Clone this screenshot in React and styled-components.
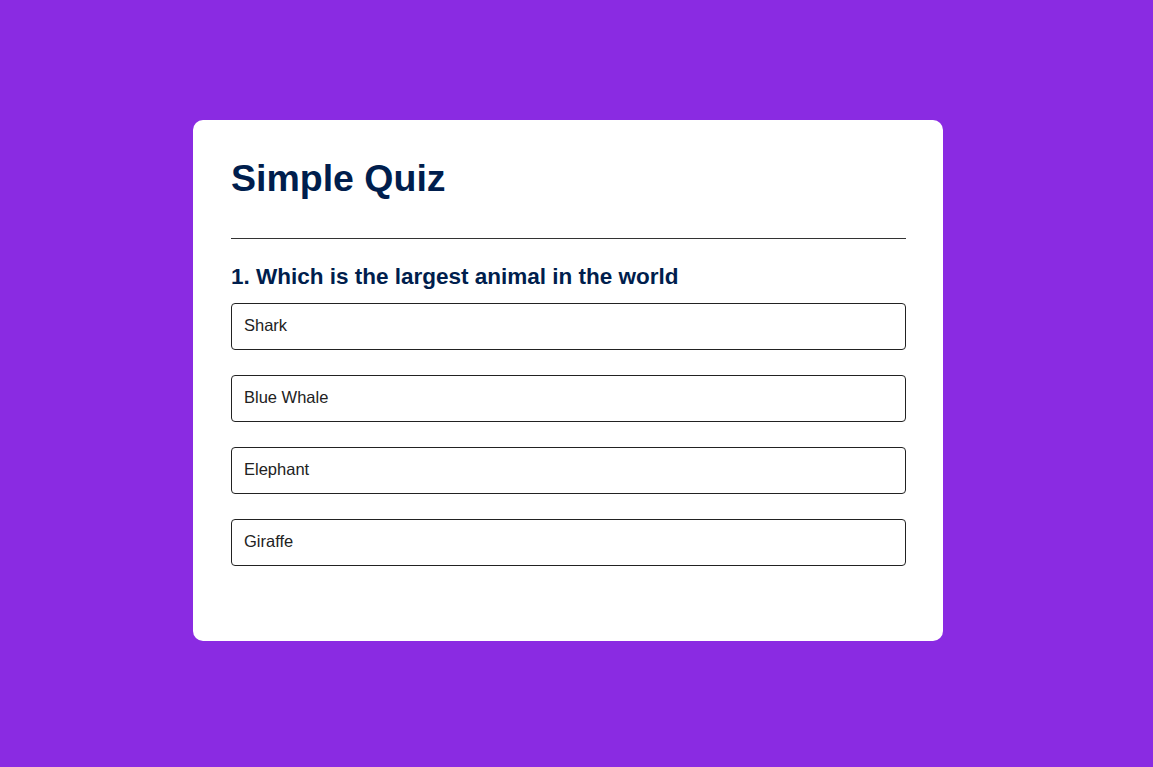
import React from 'react';
import styled, { createGlobalStyle } from 'styled-components';

const GlobalStyle = createGlobalStyle`
  * {
    box-sizing: border-box;
  }
  body {
    margin: 0;
    background: #8a2be2;
    font-family: "Liberation Sans", Arial, sans-serif;
  }
`;

const Page = styled.div`
  min-height: 767px;
  padding: 120px 17px 0 0;
  display: flex;
  justify-content: center;
  align-items: flex-start;
`;

const Card = styled.div`
  width: 750px;
  height: 521px;
  background: #fff;
  border-radius: 10px;
  padding: 36px 37px 0 38px;
  display: flex;
  flex-direction: column;
`;

const Title = styled.h1`
  margin: 0;
  font-size: 37.5px;
  font-weight: 700;
  color: #001e4d;
  line-height: 44px;
`;

const Divider = styled.hr`
  margin: 38px 0 0;
  border: 0;
  border-top: 1px solid #333;
`;

const Question = styled.h2`
  margin: 25px 0 0;
  font-size: 22.5px;
  font-weight: 700;
  color: #001e4d;
  line-height: 26px;
`;

const Answers = styled.div`
  margin-top: 13px;
  display: flex;
  flex-direction: column;
  gap: 25px;
`;

const Answer = styled.button`
  height: 47px;
  width: 100%;
  background: #fff;
  color: #222;
  border: 1px solid #222;
  border-radius: 4px;
  padding: 0 12px 2px;
  text-align: left;
  font-family: "Liberation Sans", Arial, sans-serif;
  font-size: 16.5px;
  cursor: pointer;
`;

const answers = ['Shark', 'Blue Whale', 'Elephant', 'Giraffe'];

export default function App() {
  return (
    <>
      <GlobalStyle />
      <Page>
        <Card>
          <Title>Simple Quiz</Title>
          <Divider />
          <Question>1. Which is the largest animal in the world</Question>
          <Answers>
            {answers.map(a => (
              <Answer key={a}>{a}</Answer>
            ))}
          </Answers>
        </Card>
      </Page>
    </>
  );
}
